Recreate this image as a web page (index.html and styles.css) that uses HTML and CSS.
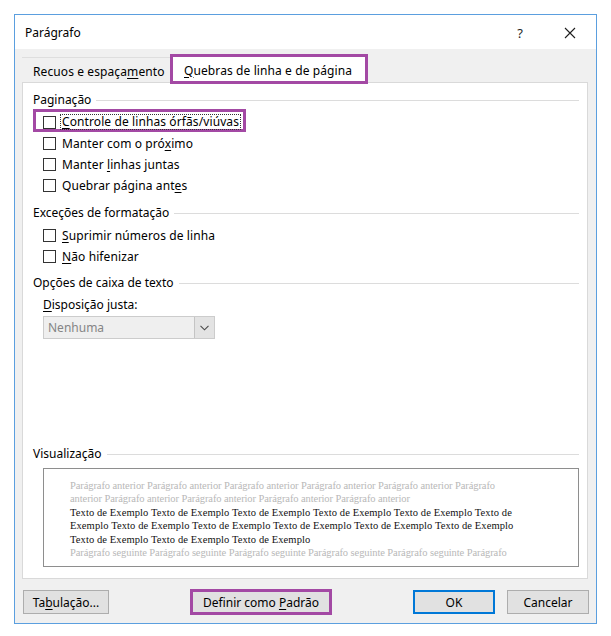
FILE: index.html
```html
<!DOCTYPE html>
<html lang="pt">
<head>
<meta charset="utf-8">
<title>Parágrafo</title>
<link rel="stylesheet" href="styles.css">
</head>
<body>
<div class="dialog">
  <div class="titlebar">
    <span class="title">Parágrafo</span>
    <span class="help">?</span>
    <span class="close"><svg width="12" height="12" viewBox="0 0 12 12"><path d="M1 1L11 11M11 1L1 11" stroke="#1e1e1e" stroke-width="1.1" fill="none"/></svg></span>
  </div>
  <div class="tabstrip">
    <div class="tab"><span>Recuos e espaça<u>m</u>ento</span></div>
    <div class="tab active"><span><u>Q</u>uebras de linha e de página</span></div>
  </div>
  <div class="panel">
    <div class="group-head"><span>Paginação</span><span class="rule"></span></div>
    <div class="checks first">
      <div class="check highlight"><span class="box"></span><span class="focus"><u>C</u>ontrole de linhas órfãs/viúvas</span></div>
      <div class="check"><span class="box"></span><span>Manter com o pró<u>x</u>imo</span></div>
      <div class="check"><span class="box"></span><span>Manter <u>l</u>inhas juntas</span></div>
      <div class="check"><span class="box"></span><span>Quebrar página ant<u>e</u>s</span></div>
    </div>
    <div class="group-head g2"><span>Exceções de formatação</span><span class="rule"></span></div>
    <div class="checks">
      <div class="check"><span class="box"></span><span><u>S</u>uprimir números de linha</span></div>
      <div class="check"><span class="box"></span><span><u>N</u>ão hifenizar</span></div>
    </div>
    <div class="group-head g3"><span>Opções de caixa de texto</span><span class="rule"></span></div>
    <div class="field-label"><u>D</u>isposição justa:</div>
    <div class="select">
      <span class="value">Nenhuma</span>
      <span class="arrow"><svg width="9" height="6" viewBox="0 0 9 6"><path d="M0.5 0.8L4.5 4.8L8.5 0.8" stroke="#4a4a4a" stroke-width="1.1" fill="none"/></svg></span>
    </div>
    <div class="group-head preview-head"><span>Visualização</span><span class="rule"></span></div>
    <div class="preview">
      <div class="line grey">Parágrafo anterior Parágrafo anterior Parágrafo anterior Parágrafo anterior Parágrafo anterior Parágrafo</div>
      <div class="line grey">anterior Parágrafo anterior Parágrafo anterior Parágrafo anterior Parágrafo anterior</div>
      <div class="line dark">Texto de Exemplo Texto de Exemplo Texto de Exemplo Texto de Exemplo Texto de Exemplo Texto de</div>
      <div class="line dark">Exemplo Texto de Exemplo Texto de Exemplo Texto de Exemplo Texto de Exemplo Texto de Exemplo</div>
      <div class="line dark">Texto de Exemplo Texto de Exemplo Texto de Exemplo</div>
      <div class="line grey">Parágrafo seguinte Parágrafo seguinte Parágrafo seguinte Parágrafo seguinte Parágrafo seguinte Parágrafo</div>
    </div>
  </div>
  <div class="buttons">
    <div class="btn tabs"><span>Ta<u>b</u>ulação...</span></div>
    <div class="btn default"><span>Definir como <u>P</u>adrão</span></div>
    <div class="btn ok"><span>OK</span></div>
    <div class="btn cancel"><span>Cancelar</span></div>
  </div>
</div>
</body>
</html>
```

FILE: styles.css
```css
body {
  margin: 0;
  background: #ffffff;
  font-family: "Noto Sans", "Open Sans", sans-serif;
  font-size: 12px;
  color: #000000;
}

u {
  text-decoration: underline;
  text-underline-offset: 2px;
}

.dialog {
  margin: 14px 0 0 14px;
  width: 583px;
  height: 610px;
  box-sizing: border-box;
  border: 1px solid #5b9fdf;
  background: #f0f0f0;
  display: flex;
  flex-direction: column;
}

.titlebar {
  height: 34px;
  flex: none;
  background: #ffffff;
  display: flex;
  align-items: center;
  padding: 1px 0 0 10px;
  box-sizing: border-box;
}

.title {
  flex: 1;
  font-size: 12px;
}

.help {
  font-size: 13px;
  color: #1e1e1e;
  margin-right: 41px;
}

.close {
  display: flex;
  margin-right: 20px;
}

.tabstrip {
  height: 33px;
  flex: none;
  display: flex;
  align-items: flex-end;
  padding-left: 7px;
}

.tab {
  height: 25px;
  width: 148px;
  box-sizing: border-box;
  padding: 2px 0 0 11px;
  border-top: 1px solid #dedede;
  display: flex;
  align-items: center;
  letter-spacing: 0.1px;
}

.tab.active {
  width: 198px;
  height: 30px;
  margin-bottom: -2px;
  border: 3px solid #a349a4;
  background: #ffffff;
  padding: 2px 0 0 11px;
  position: relative;
  z-index: 1;
}

.panel {
  margin: 0 8px 0 7px;
  height: 497px;
  flex: none;
  box-sizing: border-box;
  border: 1px solid #d9d9d9;
  background: #ffffff;
  padding: 9px 8px 11px 10px;
  display: flex;
  flex-direction: column;
}

.group-head {
  display: flex;
  align-items: center;
  height: 16px;
  line-height: 16px;
}

.group-head .rule {
  flex: 1;
  border-top: 1px solid #dcdcdc;
  margin-left: 5px;
}

.group-head.g2 {
  margin-top: 9px;
}

.group-head.g3 {
  margin-top: 8px;
}

.checks {
  margin-left: 10px;
  margin-top: 4px;
  display: flex;
  flex-direction: column;
}

.checks.first {
  margin-top: 1px;
}

.check {
  height: 21px;
  display: flex;
  align-items: center;
  letter-spacing: 0.1px;
}

.box {
  width: 13px;
  height: 13px;
  flex: none;
  box-sizing: border-box;
  border: 1px solid #333333;
  background: #ffffff;
  margin-right: 6px;
}

.check.highlight {
  height: 23px;
  box-sizing: border-box;
  margin: 0 0 1px -10px;
  padding: 3px 2px 0 7px;
  border: 3px solid #a349a4;
  align-self: flex-start;
}

.focus {
  border: 1px dotted #333333;
  line-height: 14px;
  margin-left: -2px;
  padding: 0 1px;
}

.field-label {
  margin: 6px 0 0 10px;
  line-height: 16px;
}

.select {
  margin: 3px 0 0 10px;
  width: 172px;
  height: 23px;
  box-sizing: border-box;
  border: 1px solid #cccccc;
  background: #efefef;
  display: flex;
}

.select .value {
  flex: 1;
  padding-left: 4px;
  line-height: 21px;
  color: #858585;
}

.select .arrow {
  width: 19px;
  border-left: 1px solid #c4c4c4;
  background: #e3e3e3;
  display: flex;
  align-items: center;
  justify-content: center;
}

.preview-head {
  margin-top: auto;
}

.preview {
  margin: 6px 0 0 10px;
  height: 99px;
  box-sizing: border-box;
  border: 1px solid #8e8e8e;
  background: #ffffff;
  padding: 10px 0 0 26px;
  overflow: hidden;
  font-family: "Liberation Serif", "Times New Roman", serif;
  font-size: 10.5px;
  line-height: 13.4px;
}

.line {
  white-space: nowrap;
}

.line.grey {
  color: #b8b8b8;
  letter-spacing: -0.09px;
}

.line.dark {
  color: #111111;
  letter-spacing: 0.1px;
}

.buttons {
  flex: none;
  display: flex;
  align-items: center;
  height: 24px;
  margin-top: 11px;
  padding: 0 7px 0 8px;
}

.btn {
  height: 24px;
  box-sizing: border-box;
  border: 1px solid #adadad;
  background: #e1e1e1;
  display: flex;
  align-items: center;
  justify-content: center;
}

.btn.tabs {
  width: 86px;
}

.btn.default {
  width: 142px;
  height: 26px;
  margin-left: 81px;
  border: 3px solid #a349a4;
}

.btn.ok {
  width: 82px;
  margin-left: auto;
  border: 2px solid #0078d7;
}

.btn.cancel {
  width: 82px;
  margin-left: 12px;
}
```
